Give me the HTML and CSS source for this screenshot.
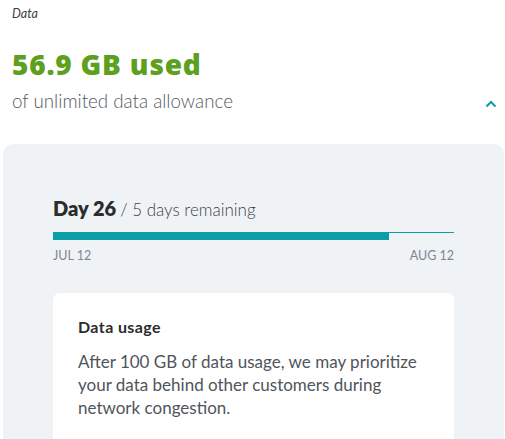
FILE: index.html
```html
<!DOCTYPE html>
<html>
<head>
<meta charset="utf-8">
<link rel="stylesheet" href="styles.css">
</head>
<body>
<div class="page">
  <div class="label">Data</div>
  <div class="headline">56.9 GB used</div>
  <div class="subrow">
    <span class="sub">of unlimited data allowance</span>
    <svg class="chev" width="12" height="8" viewBox="0 0 12 8"><path d="M1.5 6.5 L6 2 L10.5 6.5" fill="none" stroke="#0b9ea6" stroke-width="2"/></svg>
  </div>
  <div class="panel">
    <div class="day"><span class="daynum">Day 26</span> <span class="rem">/ 5 days remaining</span></div>
    <div class="bar"><div class="fill" style="width:83.8%"></div></div>
    <div class="dates"><span>JUL 12</span><span>AUG 12</span></div>
    <div class="card">
      <div class="card-title">Data usage</div>
      <p class="card-text">After 100 GB of data usage, we may prioritize your data behind other customers during network congestion.</p>
    </div>
  </div>
</div>
</body>
</html>
```
FILE: styles.css
```css
html, body { margin: 0; padding: 0; background: #fff; }
body { font-family: "Lato", "Open Sans", sans-serif; color: #2a2c2e; overflow: hidden; }
.page { width: 505px; height: 439px; overflow: hidden; }
.label { font-style: italic; font-size: 12.5px; color: #3a3d41; padding: 7px 0 0 12px; line-height: 14px; }
.headline { font-family: "Open Sans", sans-serif; font-weight: 800; font-size: 28px; color: #5ca01d; padding: 25px 0 0 12px; margin-bottom: 6px; line-height: 36px; letter-spacing: 0.8px; }
.subrow { display: flex; align-items: center; justify-content: space-between; padding: 0 8px 0 12px; }
.sub { font-size: 18.75px; font-weight: 300; color: #54595f; line-height: 26px; }
.chev { margin-top: 6px; }
.panel { margin: 30px 1px 0 3px; background: #f0f3f6; border-radius: 10px; padding: 51px 50px 40px 50px; min-height: 300px; }
.day { line-height: 26px; }
.daynum { font-weight: 800; font-size: 20px; color: #2a2c2e; }
.rem { font-size: 17px; font-weight: 300; color: #3e4247; }
.bar { margin-top: 9px; height: 8px; border-top: 1px solid #0b9ea6; box-sizing: border-box; }
.fill { background: #0b9ea6; height: 8px; margin-top: -1px; }
.dates { display: flex; justify-content: space-between; font-size: 12.5px; color: #7b8693; margin-top: 8px; line-height: 16px; }
.card { background: #fff; border-radius: 7px; margin-top: 29px; padding: 24px 25px 30px 25px; }
.card-title { font-weight: 700; font-size: 16px; letter-spacing: 0.4px; color: #2a2c2e; line-height: 20px; }
.card-text { margin: 13px 0 0 0; font-size: 17px; font-weight: 400; color: #50555b; line-height: 23px; }
```
